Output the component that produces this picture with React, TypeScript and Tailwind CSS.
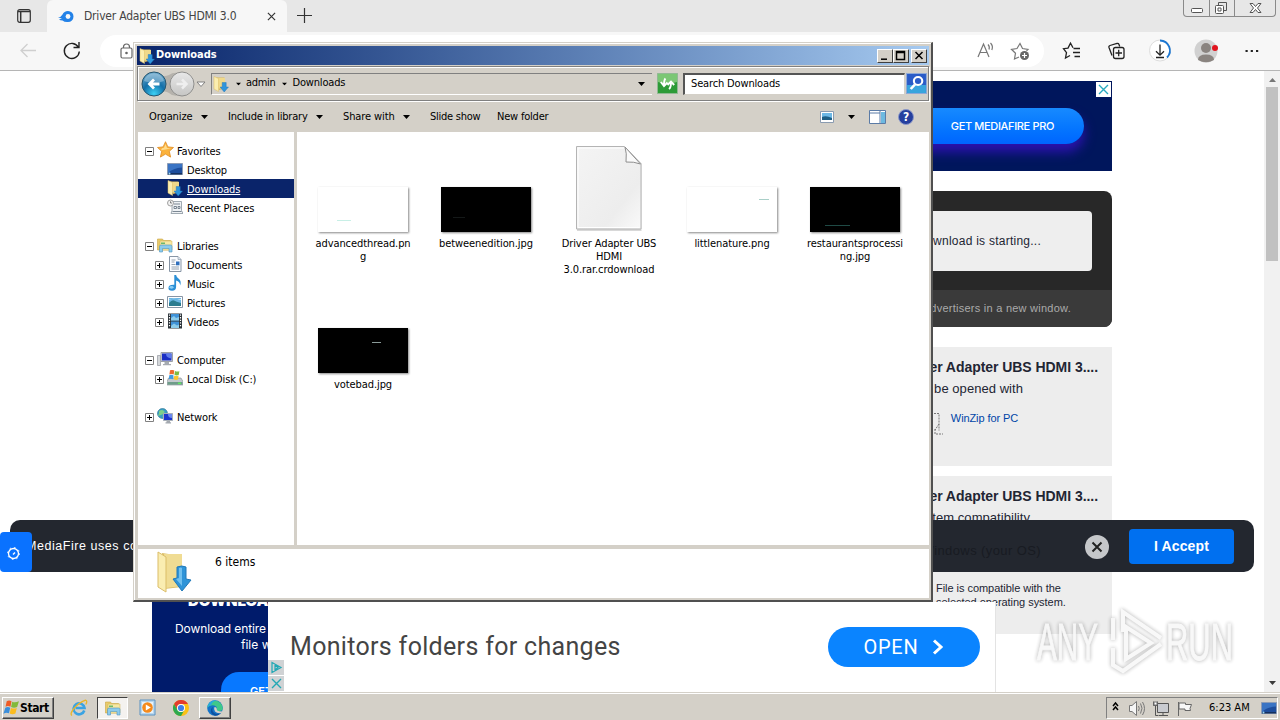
import React from 'react';
import clsx from 'clsx';

const FolderDown: React.FC<{ size?: number }> = ({ size = 16 }) => (
  <svg width={size} height={size} viewBox="0 0 16 16" className="shrink-0">
    <path d="M3 1.500h8.500v11L6 14z" fill="#d9b95c" />
    <path d="M4.500 2H12v10.500H5z" fill="#f0d98a" />
    <path d="M1 .5l4.500 2V15.500L1 13z" fill="#fbeeb0" stroke="#dcbc62" strokeWidth=".5" />
    <path d="M9.200 6.500h4V11h2.300l-4.300 5L7 11h2.200z" fill="#2f95dc" stroke="#1b70b4" strokeWidth=".4" />
  </svg>
);

const Libraries: React.FC<{ size?: number }> = ({ size = 16 }) => (
  <svg width={size} height={size} viewBox="0 0 16 16" className="shrink-0">
    <path d="M.5 2h5l1 1.500h7V13H.5z" fill="#e8cb6c" stroke="#c9a545" strokeWidth=".6" />
    <path d="M3 4h12v9H3z" fill="#f7e8a3" stroke="#d0b050" strokeWidth=".5" />
    <path d="M4 5.500h4v1.500H4z" fill="#6db86a" />
    <path d="M2.500 15V9.500q0-1.500 1.500-1.500h9.500q1.500 0 1.500 1.500V15h-3v-3.500H5.500V15z" fill="#8ccbec" stroke="#4d94bf" strokeWidth=".6" />
  </svg>
);

const Desktop = () => (
  <svg width="16" height="16" viewBox="0 0 16 16" className="shrink-0">
    <path d="M.5 2.500h15v11H.5z" fill="#1d4d9c" stroke="#8b9bb5" />
    <path d="M1 3h14v3.500Q6 7 1 12z" fill="#3a74c4" />
    <path d="M1 12h14v1.500H1z" fill="#14305f" />
    <circle cx="2.500" cy="12.500" r="1" fill="#9bd7f5" />
  </svg>
);

const Recent = () => (
  <svg width="16" height="16" viewBox="0 0 16 16" className="shrink-0">
    <path d="M5 2.500h9.500v9L16 14.500H4l1-3z" fill="#eef1f4" stroke="#8a959f" strokeWidth=".8" />
    <path d="M7 5h6M7 7.500h2.500v2H7zM11 7.500h2v2h-2zM5.500 12.500h9" fill="none" stroke="#6d7b88" strokeWidth=".9" />
    <circle cx="3.500" cy="4" r="3" fill="#f2f2f2" stroke="#8c8c8c" strokeWidth=".8" />
    <path d="M3.500 2.300V4H5" fill="none" stroke="#555" strokeWidth=".7" />
  </svg>
);

const Star = () => (
  <svg width="17" height="17" viewBox="0 0 17 17" className="-mt-px shrink-0">
    <path d="M8.500.7l2.400 5.200 5.600.6-4.200 3.800 1.300 5.800-5.100-3-5.100 3 1.300-5.800L.5 6.500l5.600-.6z" fill="#fbb23c" stroke="#e08a1e" strokeWidth=".8" />
    <path d="M8.500 3l1.500 4 4 .3-4 1-6 1 1-2 2-.5z" fill="#ffdc8c" />
  </svg>
);

const Documents = () => (
  <svg width="16" height="16" viewBox="0 0 16 16" className="shrink-0">
    <path d="M2.500.5H11l3 3v12H2.500z" fill="#fafcff" stroke="#8795a5" />
    <path d="M11 .5v3h3" fill="#d9e2ec" stroke="#8795a5" strokeWidth=".6" />
    <path d="M4.500 4h4M4.500 6h3M4.500 8.500h4M4.500 11h7.500M4.500 13h7.500" stroke="#7c8a9a" strokeWidth=".8" />
    <path d="M9 5.500h3.500v3.800H9z" fill="#2e6ebd" />
  </svg>
);

const Music = () => (
  <svg width="16" height="16" viewBox="0 0 16 16" className="shrink-0">
    <path d="M7.300 0h1.800q.3 2.500 2.900 4 2.600 2 1.200 6.500-.2-4-4.100-5V12q0 3.700-4 3.700T1.500 12.800q0-3.300 5.800-3z" fill="#2b8fd6" />
    <ellipse cx="4.500" cy="12.300" rx="2" ry="1.400" fill="#8bcff5" />
  </svg>
);

const Pictures = () => (
  <svg width="16" height="16" viewBox="0 0 16 16" className="shrink-0">
    <path d="M.5 2.500h15v11H.5z" fill="#fff" stroke="#8795a5" />
    <path d="M2 4h12v8H2z" fill="#6cb7e4" />
    <path d="M2 9q3-3.500 5-2.500T14 9v3H2z" fill="#2b7c8f" />
    <path d="M2 5.500q5-1.500 12 .5V5H2z" fill="#d8f0fb" />
  </svg>
);

const Videos = () => (
  <svg width="16" height="16" viewBox="0 0 16 16" className="shrink-0">
    <path d="M1 .5h14v15H1z" fill="#2b3238" />
    <path d="M4 1h8v6.500H4zM4 8.500h8V15H4z" fill="#3f92d8" />
    <path d="M4 5l3-2 2 2 3-1v3.500H4zM4 13l3-2.500 3 2 2-1V15H4z" fill="#8bcbea" />
    <path d="M2.500 1.500v13M13.500 1.500v13" stroke="#fff" strokeWidth="1.200" strokeDasharray="1.300 1.300" />
  </svg>
);

const Computer = () => (
  <svg width="16" height="16" viewBox="0 0 16 16" className="shrink-0">
    <path d="M.5 4.500h3v10h-3z" fill="#d4d7da" stroke="#92979d" strokeWidth=".7" />
    <path d="M4 1.500h11.500v9H4z" fill="#d8dadd" stroke="#9ca1a7" />
    <path d="M5 2.500h9.500v7H5z" fill="#1b2fc4" />
    <path d="M9 2.500h5.500v5Q9 7 9 2.500z" fill="#5e7bea" />
    <path d="M7.500 11h4.500v2H14v1.200H6V13h1.500z" fill="#a6abb1" />
  </svg>
);

const Disk = () => (
  <svg width="16" height="16" viewBox="0 0 16 16" className="shrink-0">
    <path d="M1.500 8h12.500L16 11.500V15H0v-3.500z" fill="#c3c9ce" stroke="#828a91" strokeWidth=".6" />
    <path d="M.5 12h15v2.700H.5z" fill="#6f9d8a" />
    <path d="M11 13.300h3" stroke="#5ef05b" strokeWidth="1.400" />
    <path d="M3 .3q2.300-1 4.300.3L6.700 4.500q-2.200-1.200-4.300 0z" fill="#ee6a2e" />
    <path d="M8 1q2.200 1 4.400.2L11.700 5q-2.200.9-4.300-.2z" fill="#7dbb42" />
    <path d="M2.300 5.200q2.200-1.100 4.300.2l-.5 3.900q-2.200-1.100-4.300 0z" fill="#3f9be0" />
    <path d="M7.300 5.600q2.200 1 4.300 0l-.6 4q-2.200.8-4.300-.3z" fill="#fbc52c" />
  </svg>
);

const Network = () => (
  <svg width="16" height="16" viewBox="0 0 16 16" className="-mt-px shrink-0">
    <circle cx="5.500" cy="5.500" r="5" fill="#3a9ec4" stroke="#23708f" strokeWidth=".6" />
    <path d="M2 3q3-2 5 0T4 7 2 6zM5 8l3-1v3z" fill="#7dd18a" />
    <path d="M6.500 5.500h9v7h-9z" fill="#1d35cf" stroke="#a9b0b8" />
    <path d="M11 6h4v4q-4 0-4-4z" fill="#6b89ef" />
    <path d="M9.500 13h3.500v1.300h1V15.500H8.500v-1.200h1z" fill="#a4a9b0" />
  </svg>
);

const Flag: React.FC<{ size?: number }> = ({ size = 17 }) => (
  <svg width={size} height={size} viewBox="0 0 16 16" className="shrink-0">
    <path d="M3.500 2.200q2.300-1.500 4.500 0L7 7.300q-2.300-1.200-4.600 0z" fill="#ef5b25" />
    <path d="M8.700 2.500q2.600 1.300 6.300-.5l-1.700 5.500q-3 1.300-5.700 0z" fill="#82b93c" />
    <path d="M2.200 8.200q2.300-1.300 4.600 0l-1.200 5.300q-2.300-1.400-5.200.3z" fill="#3a8edb" />
    <path d="M7.500 8.400q2.600 1.300 5.500 0l-1.300 5.200q-2.700 1.300-5.400 0z" fill="#fbbc1f" />
  </svg>
);

const IE = () => (
  <svg width="18" height="18" viewBox="0 0 18 18">
    <path d="M14.300 11.500A5.500 5.500 0 1 1 14.500 9H5.500" fill="none" stroke="#3aa3e3" strokeWidth="2.600" />
    <path d="M2 16.500Q-.5 15 4 9.500T15.500 1.200q2.300.6.300 4.300" fill="none" stroke="#e8b52a" strokeWidth="1.300" />
  </svg>
);

const Player = () => (
  <svg width="17" height="17" viewBox="0 0 17 17">
    <path d="M1 1h15v15H1z" fill="#b9d7ee" stroke="#5b92c2" />
    <path d="M3 3h11v11H3z" fill="#e7f2fa" />
    <circle cx="8.500" cy="8.500" r="5.300" fill="#f58a1c" />
    <path d="M6.800 5.500v6l5-3z" fill="#fff" />
  </svg>
);

const Chrome = () => (
  <svg width="16" height="16" viewBox="0 0 16 16">
    <circle cx="8" cy="8" r="8" fill="#fbc116" />
    <path d="M1.070 4A8 8 0 0 1 14.930 4H8a4 4 0 0 0-3.460 6z" fill="#e33b2e" />
    <path d="M1.070 4A8 8 0 0 0 8 16l3.460-6A4 4 0 0 1 4.540 10z" fill="#2da94f" />
    <circle cx="8" cy="8" r="4" fill="#fff" />
    <circle cx="8" cy="8" r="3.100" fill="#3f7fe8" />
  </svg>
);

const Edge = () => (
  <svg width="16" height="16" viewBox="0 0 16 16">
    <circle cx="8" cy="8" r="7.800" fill="#1473c8" />
    <path d="M.3 7.500A7.800 7.800 0 0 1 15.800 8q0 3-3.300 3-3 0-2.700-1.500.6-1.500-.6-3Q5 3.500.3 7.500z" fill="#3fc88a" />
    <path d="M.3 7.500A7.800 7.800 0 0 1 9 .3Q4 3 4.500 5 2 5.500.3 7.500z" fill="#28a9dd" />
    <path d="M6 7q-2 4 2 6.500 3 1.200 6.300-1.200-1.800 3.400-6.300 3.500Q3 14 4 9.500 4.500 7.500 6 7z" fill="#0c50a0" />
    <path d="M7.500 7q2.500 0 2.300 2.500.1 1.500 2.700 1.700l3 .3-1 1.500q-4 1-6.500-1.500Q6.500 8.500 7.500 7z" fill="#d4d0c8" />
  </svg>
);

const Arrow = ({ className = '' }: { className?: string }) => (
  <svg width="7" height="4" viewBox="0 0 7 4" className={clsx('shrink-0', className)}>
    <path d="M0 0h7L3.500 4z" fill="#000" />
  </svg>
);

const tree: ([React.FC, string, number, string?] | null)[] = [
  [Star, 'Favorites', 0, '-'],
  [Desktop, 'Desktop', 1],
  [FolderDown, 'Downloads', 1],
  [Recent, 'Recent Places', 1],
  null,
  [Libraries, 'Libraries', 0, '-'],
  [Documents, 'Documents', 1, '+'],
  [Music, 'Music', 1, '+'],
  [Pictures, 'Pictures', 1, '+'],
  [Videos, 'Videos', 1, '+'],
  null,
  [Computer, 'Computer', 0, '-'],
  [Disk, 'Local Disk (C:)', 1, '+'],
  null,
  [Network, 'Network', 0, '+'],
];

const Sidebar = () => (
  <div className="w-[156px] bg-white pt-[9px] text-[11px]">
    {tree.map((row, i) => {
      if (!row) return <div key={i} className="h-[19px]" />;
      const [Icon, name, depth, box] = row;
      const selected = name === 'Downloads';
      return (
        <div key={i} className={clsx('flex h-[19px] items-center', depth ? 'pl-[17px]' : 'pl-[7px]', selected && 'bg-[#0a246a] text-white')}>
          <svg width="9" height="9" viewBox="0 0 9 9" className="mt-px mr-[3px] shrink-0">
            {box && <path d="M.5.5h8v8h-8z" fill="#fff" stroke="#808080" />}
            {box && <path d={box === '+' ? 'M2 4.500h5M4.500 2v5' : 'M2 4.500h5'} stroke="#000" />}
          </svg>
          <div className="-mt-px flex w-5 items-center"><Icon /></div>
          <span className={clsx('pt-[3px] tracking-[-0.12px]', selected && 'underline')}>{name}</span>
        </div>
      );
    })}
  </div>
);

const files = [
  { lines: ['advancedthread.pn', 'g'], dark: false, mark: 'left-[19px] top-[33px] w-[14px] bg-[#c8efe6]' },
  { lines: ['betweenedition.jpg'], dark: true, mark: 'left-[12px] top-[30px] w-[12px] bg-[#141818]' },
  { lines: ['Driver Adapter UBS', 'HDMI', '3.0.rar.crdownload'], page: true },
  { lines: ['littlenature.png'], dark: false, mark: 'left-[72px] top-[12px] w-[10px] bg-[#a9cfc8]' },
  { lines: ['restaurantsprocessi', 'ng.jpg'], dark: true, mark: 'left-[15px] top-[38px] w-[25px] bg-[#1f4a45]' },
  { lines: ['votebad.jpg'], dark: true, mark: 'left-[54px] top-[14px] w-[9px] bg-[#8a9a98]' },
];

const BlankPage = () => (
  <svg width="69" height="87" viewBox="0 0 69 87" className="ml-px">
    <defs>
      <linearGradient id="sheet" x1="0" y1="0" x2="1" y2="1">
        <stop offset="0" stopColor="#f4f4f4" />
        <stop offset=".7" stopColor="#ededed" />
        <stop offset="1" stopColor="#fafafa" />
      </linearGradient>
    </defs>
    <path d="M2 2.500h48l16.500 17V86H2z" fill="#d8d8d8" />
    <path d="M1.500 1.500h48L66 18.500V84H1.500z" fill="url(#sheet)" stroke="#b4b4b4" />
    <path d="M3 3h46M3 3v79.500h61.500" fill="none" stroke="#fff" />
    <path d="M50 2q2 6 1 15 8-.5 14.500 2z" fill="#fafafa" stroke="#8e8e8e" />
  </svg>
);

const Files = () => (
  <div className="grid h-[413px] flex-1 grid-cols-[repeat(5,123px)] content-start bg-white pl-1">
    {files.map((f) => (
      <div key={f.lines[0]} className="flex h-[141px] flex-col items-center">
        <div className="flex h-[100px] shrink-0 items-end">
          {f.page ? <BlankPage /> : (
            <div className={clsx('relative h-[45px] w-[90px] shadow-[1px_1px_2px_#888]', f.dark ? 'bg-black' : 'bg-white')}>
              <div className={clsx('absolute h-px', f.mark)} />
            </div>
          )}
        </div>
        <div className="pt-[5px] pl-px text-center text-[11px] leading-[13px] tracking-[-0.08px]">
          {f.lines.map((l) => <div key={l}>{l}</div>)}
        </div>
      </div>
    ))}
  </div>
);

const CaptionButton: React.FC<{ d: string; className?: string }> = ({ d, className }) => (
  <div className={clsx('h-[14px] w-4 border border-t-white border-l-white border-r-[#404040] border-b-[#404040] bg-[#d4d0c8]', className)}>
    <svg width="14" height="12" viewBox="0 0 14 12"><path d={d} fill="none" stroke="#000" strokeWidth="1.500" /></svg>
  </div>
);

const Explorer = () => (
  <div className="absolute left-[133px] top-[42px] z-30 flex h-[560px] w-[800px] flex-col border border-t-[#d4d0c8] border-l-[#d4d0c8] border-r-2 border-b-2 border-r-[#505050] border-b-[#505050] bg-[#d4d0c8] pl-[3px] pr-[2px] pt-[3px] shadow-[inset_1px_1px_0_white]">
    <div className="flex h-[19px] shrink-0 items-center bg-linear-to-r from-[#0a246a] to-[#a6caf0] pl-[2px] pr-[2px]">
      <FolderDown />
      <span className="ml-px flex-1 text-[11px] font-bold tracking-[-0.05px] text-white">Downloads</span>
      <CaptionButton d="M3 9.200h6" />
      <CaptionButton d="M2.500 1.500h8v8h-8zM2.500 2.500h8" />
      <CaptionButton d="M3.500 2l7 7M10.500 2l-7 7" className="ml-[2px]" />
    </div>

    <div className="mt-px flex h-[35px] shrink-0 items-center border border-[#808080] shadow-[inset_1px_1px_0_white,1px_1px_0_white]">
      <svg width="71" height="30" viewBox="0 0 71 30" className="ml-[3px] shrink-0">
        <defs>
          <radialGradient id="back" cx=".5" cy=".9" r=".9">
            <stop offset="0" stopColor="#3bd0f4" />
            <stop offset=".5" stopColor="#146fa8" />
            <stop offset="1" stopColor="#6aa8cc" />
          </radialGradient>
          <linearGradient id="fwd" x1="0" y1="0" x2="0" y2="1">
            <stop offset="0" stopColor="#e8e8e8" />
            <stop offset="1" stopColor="#c6c6c4" />
          </linearGradient>
        </defs>
        <path d="M6 4q9-2 13 2 4 2 9 0 5-4 14-1v20q-9 4-14-1-4-3-9 0-4 4-13 1z" fill="#b5b2ac" />
        <circle cx="13" cy="15" r="12" fill="url(#back)" stroke="#27566f" />
        <path d="M3 12a10.300 10.300 0 0 1 20 0q-10 4-20 0z" fill="#fff" opacity=".3" />
        <path d="M18.500 15H9M13 10.500L8.500 15l4.500 4.500" fill="none" stroke="#fff" strokeWidth="2.800" />
        <circle cx="41" cy="15" r="12" fill="url(#fwd)" stroke="#8f8f8d" />
        <path d="M35.500 15H45M41 10.500l4.500 4.500-4.500 4.500" fill="none" stroke="#efefef" strokeWidth="2.500" />
        <path d="M56 13h8l-4 4.500z" fill="#fff" stroke="#777" strokeWidth=".9" />
      </svg>
      <div className="-ml-px flex h-[22px] w-[441px] items-center border-t border-l border-t-[#808080] border-l-[#808080] border-b border-b-white pl-px text-[11px]">
        <FolderDown />
        <Arrow className="ml-[6px] scale-75" />
        <span className="ml-[4px] tracking-[-0.3px]">admin</span>
        <Arrow className="mx-[5px] scale-75" />
        <span className="flex-1 tracking-[-0.18px]">Downloads</span>
        <Arrow className="mr-[7px]" />
      </div>
      <svg width="21" height="21" viewBox="0 0 21 21" className="ml-[5px] shrink-0">
        <path d="M.5.5h20v20H.5z" fill="#2d9b37" stroke="#91b993" />
        <path d="M1 1h19v8Q10 12 1 9z" fill="#7bc774" />
        <path d="M8.500 5.500Q7 7 7 12M3.800 9l3.200 4 3.500-3.500M12 16q2-1.500 2-6.500M10.500 12L14 8.500l3.200 3.500" fill="none" stroke="#fff" strokeWidth="1.900" />
      </svg>
      <div className="ml-[5px] flex h-[22px] w-[222px] items-center border border-t-2 border-l-2 border-t-[#555] border-l-[#555] border-r-[#d4d0c8] border-b-[#d4d0c8] bg-white pl-[6px] text-[11px] tracking-[-0.15px]">
        Search Downloads
      </div>
      <svg width="21" height="21" viewBox="0 0 20 21" preserveAspectRatio="none" className="ml-px shrink-0">
        <path d="M.5.5h19v20H.5z" fill="#2a5cc8" stroke="#8fa9d6" />
        <path d="M1 12h18v8H1z" fill="#39a5dd" />
        <circle cx="11.500" cy="8" r="4" fill="none" stroke="#fff" strokeWidth="2" />
        <path d="M8.500 11.500l-4 4.500" stroke="#fff" strokeWidth="2.600" />
      </svg>
    </div>

    <div className="mt-px flex h-[30px] shrink-0 items-center pl-[12px] text-[11px] tracking-[-0.1px]">
      <span className="w-[52px]">Organize</span><Arrow />
      <span className="ml-5 w-[88px] whitespace-nowrap tracking-[-0.2px]">Include in library</span><Arrow />
      <span className="ml-5 w-[60px] whitespace-nowrap">Share with</span><Arrow />
      <span className="ml-5 w-[67px] whitespace-nowrap tracking-[-0.25px]">Slide show</span>
      <span className="flex-1 tracking-[-0.2px]">New folder</span>
      <svg width="14" height="12" viewBox="0 0 14 12">
        <path d="M.5.5h13v11H.5z" fill="#fff" stroke="#8a9bb0" />
        <path d="M2 2h10v7H2z" fill="#6db8e6" />
        <path d="M2 6q4-2 10 1v2H2z" fill="#1e5f86" />
      </svg>
      <Arrow className="ml-[14px]" />
      <svg width="17" height="14" viewBox="0 0 17 14" className="ml-[14px]">
        <path d="M.5.5h16v13H.5z" fill="#fff" stroke="#5b7ba6" />
        <path d="M1 3h10M11 1v12" stroke="#5b7ba6" />
        <path d="M12 2h4v11h-4z" fill="#6db9e0" />
      </svg>
      <div className="ml-3 mr-[15px] flex size-4 items-center justify-center rounded-full border border-[#8a97c8] bg-[#253f9e] text-[12px] font-bold text-white">?</div>
    </div>

    <div className="ml-px flex h-[413px] shrink-0">
      <Sidebar />
      <div className="w-[3px] bg-[#d4d0c8]" />
      <Files />
    </div>
    <div className="ml-px mt-[4px] flex h-[49px] shrink-0 bg-white pl-4 pt-[2px] text-[12px]">
      <svg width="38" height="42" viewBox="0 0 38 42">
        <path d="M8 2l20 3v31l-18 2z" fill="#dcbf68" />
        <path d="M10 3h18v32l-16 2z" fill="#f0dc93" />
        <path d="M4 1l8 5v35L4 36z" fill="#faedb1" stroke="#dbbd69" />
        <path d="M23 16q5-2 9 0v12l5 1-9 11-9-12 4-1z" fill="#2f94d8" stroke="#2079b9" />
        <path d="M25 17q2-1 3 0v18l-6-7 3-1z" fill="#71c0ee" />
      </svg>
      <span className="ml-[23px] mt-[2px]">6 items</span>
    </div>
  </div>
);

const BrowserChrome = () => (
  <div className="shrink-0">
    <div className="flex h-8 bg-[#e7e7e7]">
      <div className="flex w-[47px] items-center pl-[17px]">
        <svg width="14" height="14" viewBox="0 0 14 14">
          <rect x=".7" y=".7" width="12.600" height="12.600" rx="2" fill="none" stroke="#333" strokeWidth="1.200" />
          <path d="M1 2.600h12M3.700 3v10" stroke="#333" strokeWidth="1.500" />
        </svg>
      </div>
      <div className="flex w-[240px] items-center rounded-t-md bg-[#f7f7f7] pl-[11px] pr-[11px]">
        <svg width="16" height="13" viewBox="0 0 16 13" className="shrink-0">
          <path d="M0 7.500q3-.2 4.500-3Q6 1 10 1a5.500 5.500 0 0 1 0 11q-3.500.3-5.500-1.500Q2 10.500 1 9.500l3-1z" fill="#2382e8" />
          <circle cx="10" cy="6.500" r="2.400" fill="#f7f7f7" />
        </svg>
        <span className="ml-[10px] flex-1 whitespace-nowrap text-[12px] tracking-[-0.2px] text-[#444]">Driver Adapter UBS HDMI 3.0</span>
        <svg width="9" height="9" viewBox="0 0 10 10"><path d="M1 1l8 8M9 1L1 9" stroke="#333" strokeWidth="1.300" /></svg>
      </div>
      <svg width="15" height="15" viewBox="0 0 15 15" className="ml-[10px] mt-2"><path d="M7.500 0v15M0 7.500h15" stroke="#333" strokeWidth="1.200" /></svg>
      <div className="ml-auto mr-1 flex h-[17px] w-[93px] rounded-b border border-t-0 border-[#8a8a8a]">
        <svg width="91" height="16" viewBox="0 0 91 16" fill="none" stroke="#555">
          <path d="M25.500 0v16M50.500 0v16" stroke="#8a8a8a" />
          <rect x="7.500" y="8.500" width="11" height="4" rx="1" fill="#fff" />
          <path d="M34.500 5V2.500h8v8H40" />
          <rect x="31.500" y="5.500" width="8" height="8" rx="1" fill="#fff" />
          <path d="M34 8h3v3h-3z" />
          <path d="M66 3.500h3l2.500 3 2.500-3h3l-3.500 4.500 3.500 4.500h-3l-2.500-3-2.500 3h-3L69.500 8z" fill="#fff" />
        </svg>
      </div>
    </div>
    <div className="flex h-[39px] items-center border-b border-[#b5b5b5] bg-[#f7f7f7]">
      <svg width="100" height="38" viewBox="0 0 100 38" fill="none">
        <path d="M36 18.500H21M27.500 12L21 18.500l6.500 6.500" stroke="#cfcfcf" strokeWidth="1.300" />
        <path d="M78.500 15.500a7.500 7.500 0 1 0 .8 4M79 10v5.500h-5.500" stroke="#222" strokeWidth="1.400" />
      </svg>
      <div className="flex h-8 w-[944px] items-center rounded-full bg-white pl-5">
        <svg width="13" height="16" viewBox="0 0 13 16" fill="none" stroke="#666" strokeWidth="1.200">
          <rect x="1" y="5" width="11" height="10" rx="1.500" />
          <path d="M3.500 5V4a3 3 0 0 1 6 0v1" />
          <circle cx="6.500" cy="10" r=".7" fill="#666" />
        </svg>
        <svg width="56" height="20" viewBox="0 0 56 20" fill="none" stroke="#777" strokeWidth="1.200" className="ml-auto mr-[11px]">
          <path d="M1 16L6.500 3 12 16M3 11.500h7M11 3.500q2 2 1 5M13.500 2q3 3 1.300 7" />
          <path d="M42 16l-4.500 2 1-5.800-4-3.900 5.500-.8L43 2.500l2.500 5 5.500.8-1.500 1.500" />
          <circle cx="47.500" cy="14.500" r="4.500" fill="#666" stroke="none" />
          <path d="M45 14.500h5M47.500 12v5" stroke="#fff" />
        </svg>
      </div>
      <svg width="236" height="38" viewBox="1044 32 236 38" fill="none" stroke="#222" strokeWidth="1.300">
        <path d="M1070 55.500l-4.500 2.500 1-5.300-3-4 4.500-.6 2.500-5 2.500 4.600M1073.500 48.500h6.500M1073 52.500h7M1074.500 56.500h5.500" />
        <path d="M1112 55.500l-3-8q-.5-1.500 1-2l7-2q1.500-.3 2 1l.7 2" />
        <rect x="1113.500" y="47.500" width="10.500" height="11" rx="2" />
        <path d="M1118.700 49.700v6.500M1115.500 53h6.500" />
        <circle cx="1160" cy="50.500" r="10.500" fill="#fff" stroke="#ddd" strokeWidth="1" />
        <path d="M1160 40.500a10 10 0 0 1 7 17" stroke="#1b76d1" strokeWidth="1.800" />
        <path d="M1160 44.500V55M1156 51.200l4 4 4-4M1156 57.500h8" />
        <circle cx="1206" cy="51" r="11.500" fill="#d1d1d1" stroke="none" />
        <circle cx="1206" cy="48" r="5" fill="#8a8480" stroke="none" />
        <path d="M1198 60q0-5.500 8-5.500t8 5.500q-8 4.500-16 0z" fill="#8a8480" stroke="none" />
        <circle cx="1215" cy="48" r="3" fill="#e1141e" stroke="none" />
        <path d="M1245.500 51h2.200M1250.700 51h2.200M1256 51h2.200" strokeWidth="2.200" />
      </svg>
    </div>
  </div>
);

const Page = () => (
  <div className="flex h-[621px] bg-white font-['Liberation_Sans',sans-serif]">
    <div className="mt-[510px] ml-[152px] h-[111px] w-[116px] overflow-hidden bg-[#001b6b] pt-[11px] font-[Inter,sans-serif] whitespace-nowrap text-white">
      <div className="pl-[36px] text-[15px] leading-[18px] font-black">DOWNLOA</div>
      <div className="mt-[11px] pl-[23px] text-[12px] leading-4 tracking-[-0.1px]">Download entire</div>
      <div className="pl-[89px] text-[12px] leading-4">file w</div>
      <div className="mt-[19px] ml-[69px] h-[21px] rounded-tl-[18px] bg-[#0878ff] pt-[9px] pl-[29px] text-[11px] leading-[20px] font-semibold">GET</div>
    </div>
    <div className="ml-[544px] w-[300px] pt-[10px] text-[#222533]">
      <div className="relative flex h-[90px] items-center bg-[#00165c]">
        <div className="ml-[60px] flex h-9 w-[212px] items-center justify-end rounded-full bg-linear-to-b from-[#178aff] to-[#0065ff] pr-[30px] font-[Inter,sans-serif] text-[11px] font-medium tracking-[-0.35px] text-white shadow-[0_8px_12px_#2c12b0]">GET MEDIAFIRE PRO</div>
        <svg width="15" height="15" viewBox="0 0 15 15" className="absolute right-px top-px bg-white"><path d="M3 3l9 9M12 3l-9 9" stroke="#28a9c0" strokeWidth="1.400" /></svg>
      </div>
      <div className="mt-5 h-[136px] overflow-hidden rounded-lg bg-[#282828] pt-5">
        <div className="ml-5 mr-5 flex h-[60px] items-center justify-end rounded bg-[#eee] pr-[51px] text-[12px] tracking-[0.25px]">download is starting...</div>
        <div className="mt-[19px] flex h-[37px] items-center justify-end whitespace-nowrap bg-[#3a3a3a] pr-[41px] text-[11px] tracking-[0.25px] text-[#aaa]">advertisers in a new window.</div>
      </div>
      <div className="mt-5 h-[119px] bg-[#ededed] pt-[12px]">
        <div className="whitespace-nowrap pr-[14px] text-right text-[14px] leading-4 font-bold tracking-[-0.05px]">Driver Adapter UBS HDMI 3....</div>
        <div className="mt-[6px] pr-[89px] text-right text-[13px] leading-4 tracking-[0.05px]">can be opened with</div>
        <div className="mt-[13px] flex items-start justify-end pr-[94px]">
          <svg width="12" height="28" viewBox="0 0 12 28" className="mr-[8px] mt-px" fill="none" stroke="#777" strokeDasharray="2 1">
            <path d="M3 2.500h5v17M8 13l-4 6M4 18v5h8" />
          </svg>
          <span className="text-[11px] leading-4 tracking-[-0.1px] text-[#0045a8]">WinZip for PC</span>
        </div>
      </div>
      <div className="mt-[10px] h-[158px] bg-[#ededed] pt-[12px]">
        <div className="whitespace-nowrap pr-[14px] text-right text-[14px] leading-4 font-bold tracking-[-0.05px]">Driver Adapter UBS HDMI 3....</div>
        <div className="mt-[6px] pr-[82px] text-right text-[13px] leading-4 tracking-[0.05px]">System compatibility</div>
        <div className="mt-[55px] pl-[124px] text-[11px] leading-[14px] tracking-[-0.04px]">File is compatible with the<br />selected operating system.</div>
      </div>
    </div>
    <div className="ml-auto flex w-4 flex-col items-center justify-between bg-[#f1f1f1] pt-[7px] pb-[7px]">
      <div className="flex flex-col items-center gap-[5px]">
        <Arrow className="rotate-180 opacity-50" />
        <div className="h-[174px] w-[12px] bg-[#c1c1c1]" />
      </div>
      <Arrow className="opacity-75" />
    </div>
  </div>
);

const BannerAd = () => (
  <div className="absolute left-[268px] top-[602px] z-10 flex h-[90px] w-[728px] items-center border-r border-[#e3e3e3] bg-white">
    <div className="mt-[58px] flex w-[22px] flex-col gap-px self-start">
      <svg width="16" height="15" viewBox="0 0 16 15" className="bg-[#d0d2d4]"><path d="M4 2.500v10l9-5zM7 5v5l3-2.500z" fill="none" stroke="#22a8b5" strokeWidth="1.200" /></svg>
      <svg width="16" height="15" viewBox="0 0 16 15" className="bg-[#d0d2d4]"><path d="M4 3l9 9M13 3l-9 9" stroke="#22a8b5" strokeWidth="1.400" /></svg>
    </div>
    <span className="w-[538px] font-[Roboto,sans-serif] text-[25px] tracking-[0.32px] text-[#444]">Monitors folders for changes</span>
    <div className="flex h-10 w-[152px] items-center justify-center gap-[14px] rounded-full bg-[#0a84ff] font-[Roboto,sans-serif] text-[20px] tracking-[0.7px] text-white">
      OPEN
      <svg width="12" height="16" viewBox="0 0 12 16"><path d="M2 1.500L9 8l-7 6.500" fill="none" stroke="#fff" strokeWidth="3" /></svg>
    </div>
  </div>
);

const CookieBar = () => (
  <>
    <div className="absolute left-[10px] top-[520px] z-20 flex h-[52px] w-[1244px] items-center rounded-[10px] bg-[#23272f] pl-4 font-['Liberation_Sans',sans-serif] text-white">
      <span className="flex-1 text-[12.5px] tracking-[0.55px]">MediaFire uses cookies</span>
      <span className="mr-[44px] mt-[9px] text-[13px] tracking-[0.4px] text-[#181b22]">Windows (your OS)</span>
      <svg width="24" height="24" viewBox="0 0 24 24" className="mt-[2px]">
        <circle cx="12" cy="12" r="12" fill="#c5c7ca" />
        <path d="M7.500 7.500l9 9M16.500 7.500l-9 9" stroke="#222" strokeWidth="2" />
      </svg>
      <div className="ml-5 mr-5 mt-px flex h-[35px] w-[105px] items-center justify-center rounded bg-[#0070f0] text-[14px] font-bold tracking-[0.15px]">I Accept</div>
    </div>
    <div className="absolute left-0 top-[532px] z-20 flex h-10 w-8 items-center rounded bg-[#0a72ff] pl-[7px]">
      <svg width="13" height="13" viewBox="0 0 13 13" className="mt-[3px]" fill="none" stroke="#fff">
        <circle cx="6.500" cy="6.500" r="5" strokeWidth="1.300" />
        <circle cx="6.500" cy="6.500" r="6" strokeWidth="1" strokeDasharray="1.500 3.200" />
        <path d="M6 7.500l2-2" strokeWidth="1.500" />
      </svg>
    </div>
  </>
);

const Watermark = () => (
  <div className="absolute left-[1036px] top-[606px] z-20 opacity-90">
    <svg width="210" height="72" viewBox="0 0 210 72" className="[filter:drop-shadow(0_0_2px_rgba(0,0,0,0.35))]" fill="none" stroke="#f8f8f8">
      <text x="1" y="54" textLength="61" lengthAdjust="spacingAndGlyphs" fill="#f8f8f8" strokeWidth=".8" className="font-['Liberation_Sans',sans-serif] text-[51px]">ANY</text>
      <text x="130" y="54" textLength="67" lengthAdjust="spacingAndGlyphs" fill="#f8f8f8" strokeWidth=".8" className="font-['Liberation_Sans',sans-serif] text-[51px]">RUN</text>
      <path d="M77 34V12" strokeWidth="4" />
      <path d="M87 26V6l38 26" strokeWidth="4" />
      <path d="M90 21v32l25-16z" strokeWidth="4" />
      <path d="M77 42v17l10 6 38-27" strokeWidth="4" />
    </svg>
  </div>
);

const Taskbar = () => (
  <div className="relative z-40 flex h-7 items-center border-t border-[#d4d0c8] bg-[#d4d0c8] pl-[2px] pr-[2px] pt-[2px] shadow-[inset_0_1px_0_white]">
    <div className="flex h-[22px] w-[52px] items-center border border-t-white border-l-white border-r-[#404040] border-b-[#404040] shadow-[inset_-1px_-1px_0_#808080]">
      <Flag />
      <span className="text-[12px] font-bold tracking-[-0.4px]">Start</span>
    </div>
    <div className="ml-4 w-[27px]"><IE /></div>
    <div className="flex h-[22px] w-[31px] items-center justify-center border border-t-[#404040] border-l-[#404040] border-r-white border-b-white bg-[#f4f2ef]"><Libraries /></div>
    <div className="ml-[11px]"><Player /></div>
    <div className="ml-[17px]"><Chrome /></div>
    <div className="ml-[10px] flex h-[22px] w-8 items-center justify-center border border-t-white border-l-white border-r-[#404040] border-b-[#404040] shadow-[inset_-1px_-1px_0_#808080]"><Edge /></div>
    <div className="ml-auto flex h-[22px] w-[172px] items-center border border-t-[#808080] border-l-[#808080] border-r-white border-b-white">
      <svg width="92" height="20" viewBox="0 0 92 20" fill="none" stroke="#777">
        <path d="M6 8l2.500-3L11 8M6 12l2.500-3 2.500 3" stroke="#000" strokeWidth="1.500" />
        <path d="M22.500 7.500H25l4.500-4v14l-4.500-4h-2.500z" fill="#f5f5f5" />
        <path d="M31.500 8q1.500 2.500 0 5M33.500 5.500q3 4.500 0 10M35.500 4q4 6.500 0 13" />
        <path d="M50.500 5.500h11v9h-11z" fill="#c9cbd0" stroke="#555" />
        <path d="M52 17.500h9M56 15v2M46.500 3.500v4h4v-4M48.500 8v9.500h3" stroke="#555" />
        <path d="M47 4h3v3h-3z" fill="#fff" />
        <path d="M71.500 4v14M72 5h6.500v1.500h6l-1.500 4 .5 2H78V11h-6z" fill="#f7f7f7" stroke="#666" />
      </svg>
      <span className="ml-[10px] flex-1 pt-px text-[11px] whitespace-nowrap">6:23 AM</span>
      <Desktop />
    </div>
  </div>
);

const App: React.FC = () => (
  <div className="relative flex h-[720px] w-[1280px] flex-col overflow-hidden bg-white font-['DejaVu_Sans_Condensed',Tahoma,sans-serif] text-black">
    <BrowserChrome />
    <Page />
    <Taskbar />
    <BannerAd />
    <CookieBar />
    <Explorer />
    <Watermark />
  </div>
);

export default App;
